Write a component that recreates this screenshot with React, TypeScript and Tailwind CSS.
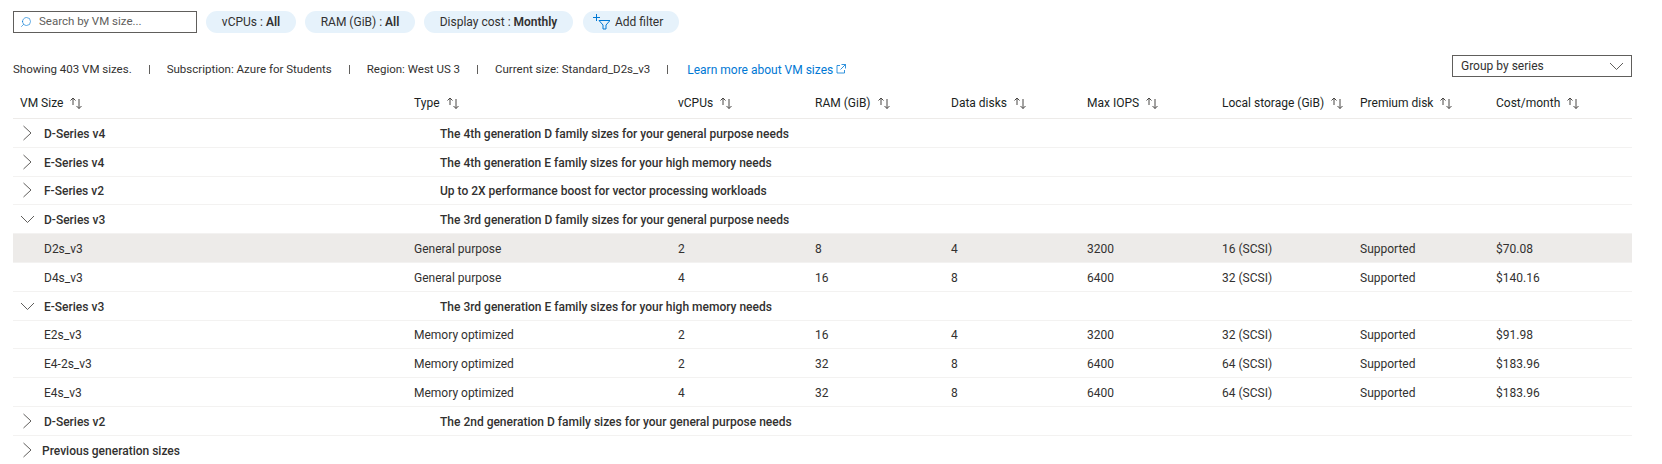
import { Search } from 'lucide-react';

const columns = ['VM Size', 'Type', 'vCPUs', 'RAM (GiB)', 'Data disks', 'Max IOPS', 'Local storage (GiB)', 'Premium disk', 'Cost/month'];

const rowGrid = 'grid grid-cols-[394px_264px_137px_136px_136px_135px_138px_136px_1fr] pl-[7px]';

type Row =
  | { kind: 'group'; name: string; desc: string; open?: boolean }
  | { kind: 'size'; cells: string[]; selected?: boolean };

const rows: Row[] = [
  { kind: 'group', name: 'D-Series v4', desc: 'The 4th generation D family sizes for your general purpose needs' },
  { kind: 'group', name: 'E-Series v4', desc: 'The 4th generation E family sizes for your high memory needs' },
  { kind: 'group', name: 'F-Series v2', desc: 'Up to 2X performance boost for vector processing workloads' },
  { kind: 'group', name: 'D-Series v3', desc: 'The 3rd generation D family sizes for your general purpose needs', open: true },
  { kind: 'size', selected: true, cells: ['D2s_v3', 'General purpose', '2', '8', '4', '3200', '16 (SCSI)', 'Supported', '$70.08'] },
  { kind: 'size', cells: ['D4s_v3', 'General purpose', '4', '16', '8', '6400', '32 (SCSI)', 'Supported', '$140.16'] },
  { kind: 'group', name: 'E-Series v3', desc: 'The 3rd generation E family sizes for your high memory needs', open: true },
  { kind: 'size', cells: ['E2s_v3', 'Memory optimized', '2', '16', '4', '3200', '32 (SCSI)', 'Supported', '$91.98'] },
  { kind: 'size', cells: ['E4-2s_v3', 'Memory optimized', '2', '32', '8', '6400', '64 (SCSI)', 'Supported', '$183.96'] },
  { kind: 'size', cells: ['E4s_v3', 'Memory optimized', '4', '32', '8', '6400', '64 (SCSI)', 'Supported', '$183.96'] },
  { kind: 'group', name: 'D-Series v2', desc: 'The 2nd generation D family sizes for your general purpose needs' },
];

function SortIcon() {
  return (
    <svg width="14" height="12" viewBox="0 0 14 12" fill="none" stroke="#484644" strokeWidth="1" className="ml-[6px] shrink-0">
      <path d="M4 8V1M1.500 3.500 4 1l2.500 2.500M10 2v9.500M7.500 9 10 11.500 12.500 9" />
    </svg>
  );
}

function ChevronIcon({ open }: { open?: boolean }) {
  return (
    <svg width="16" height="16" viewBox="0 0 16 16" fill="none" stroke="#605e5c" strokeWidth="1" className="shrink-0">
      <path d={open ? 'M1 5l6.500 6.500L14 5' : 'M3.500 1l7.500 7-7.500 7'} />
    </svg>
  );
}

function FilterPill({ label, value, width }: { label: string; value: string; width: string }) {
  return (
    <div className={`flex h-[22px] items-center justify-center rounded-full bg-[#e6f2fb] text-[#323130] ${width}`}>
      {label} :&nbsp;<span className="font-semibold">{value}</span>
    </div>
  );
}

function Sep() {
  return <span className="mx-[17px] h-[9px] w-px bg-[#605e5c]" />;
}

export default function App() {
  return (
    <div className="h-[464px] w-[1662px] overflow-hidden bg-white pt-[11px] text-[12px] text-[#323130] [font-family:Roboto,sans-serif]">
      {/* Filters */}
      <div className="flex items-center pl-[13px]">
        <div className="flex h-[22px] w-[184px] items-center border border-[#605e5c] pl-[6px] text-[11.5px] text-[#605e5c]">
          <Search size={12} strokeWidth={1.25} className="-scale-x-100 text-[#0078d4]" />
          <span className="ml-[7px]">Search by VM size...</span>
        </div>
        <div className="ml-[9px] flex gap-[9px]">
          <FilterPill label="vCPUs" value="All" width="w-[90px]" />
          <FilterPill label="RAM (GiB)" value="All" width="w-[110px]" />
          <FilterPill label="Display cost" value="Monthly" width="w-[149px]" />
          <div className="ml-px flex h-[22px] w-[96px] items-center rounded-full bg-[#e6f2fb] pl-[9px]">
            <svg width="18" height="16" viewBox="0 0 18 16" fill="none" stroke="#0078d4" strokeWidth="1" className="mr-[5px]">
              <path d="M4.500 0v7M1 3.500h7M7 6.500h11l-4 4.500v4h-3v-4z" />
            </svg>
            Add filter
          </div>
        </div>
      </div>

      {/* Summary line */}
      <div className="mt-[25px] flex h-[22px] items-center pl-[13px] pr-[30px] text-[11.5px]">
        <span className="pt-[2px]">Showing 403 VM sizes.</span>
        <Sep />
        <span className="pt-[2px]">Subscription: Azure for Students</span>
        <Sep />
        <span className="pt-[2px]">Region: West US 3</span>
        <Sep />
        <span className="pt-[2px]">Current size: Standard_D2s_v3</span>
        <Sep />
        <span className="ml-[2px] pt-[2px] text-[12px] text-[#0078d4]">Learn more about VM sizes</span>
        <svg width="10" height="10" viewBox="0 0 10 10" fill="none" stroke="#0078d4" strokeWidth="0.8" className="ml-[3px]">
          <path d="M4 1.500H1v7.500h7.500V6M5.500.5h4v4M9.500.5 4.500 5.500" />
        </svg>
        <div className="ml-auto -mt-[6px] flex h-[22px] w-[180px] items-center justify-between border border-[#605e5c] pl-[8px] pr-[6px] text-[12px]">
          Group by series
          <ChevronIcon open />
        </div>
      </div>

      {/* Table */}
      <div className="ml-[13px] w-[1619px]">
        <div className={`${rowGrid} mt-[8px] h-[31px] items-center border-b border-[#edebe9] text-[#201f1e]`}>
          {columns.map((c) => (
            <div key={c} className="flex items-center whitespace-nowrap">
              {c}
              <SortIcon />
            </div>
          ))}
        </div>

        {rows.map((row) =>
          row.kind === 'group' ? (
            <div key={row.name} className={`${rowGrid} h-[28.8px] items-center border-b border-[#f3f2f1] font-medium`}>
              <div className="flex items-center whitespace-nowrap">
                <ChevronIcon open={row.open} />
                <span className="ml-[8px] pt-[2px]">{row.name}</span>
              </div>
              <div className="col-span-8 pl-[26px] pt-[2px]">{row.desc}</div>
            </div>
          ) : (
            <div
              key={row.cells[0]}
              className={`${rowGrid} h-[28.8px] items-center border-b border-[#f3f2f1] pt-[2px] ${row.selected ? 'bg-[#edebe9]' : ''}`}
            >
              {row.cells.map((cell, i) => (
                <div key={i} className={i === 0 ? 'pl-[24px]' : ''}>
                  {cell}
                </div>
              ))}
            </div>
          ),
        )}

        <div className="flex h-[29px] items-center pl-[7px] font-medium">
          <ChevronIcon />
          <span className="ml-[6px] pt-[2px]">Previous generation sizes</span>
        </div>
      </div>
    </div>
  );
}
